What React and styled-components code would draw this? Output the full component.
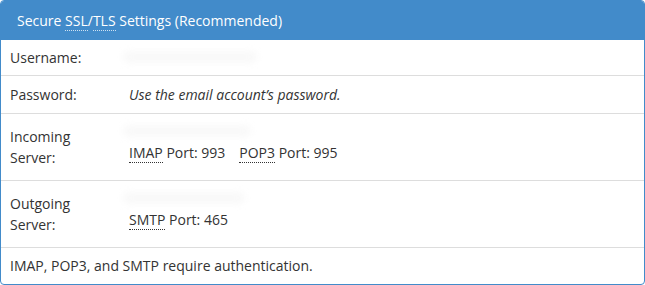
import React from "react";
import styled, { createGlobalStyle } from "styled-components";

const GlobalStyle = createGlobalStyle`
  html, body {
    margin: 0;
    padding: 0;
    background: #fff;
  }
  body {
    font-family: "Open Sans", "Liberation Sans", sans-serif;
    font-size: 14px;
    line-height: 20px;
    color: #333;
  }
`;

const Panel = styled.div`
  width: 645px;
  box-sizing: border-box;
  border: 1px solid #428bca;
  border-radius: 4px;
  overflow: hidden;
  background: #fff;
`;

const Heading = styled.div`
  height: 39px;
  box-sizing: border-box;
  padding: 10px 16px 9px;
  background: #428bca;
  color: #fff;
  font-size: 14px;
  line-height: 20px;
`;

const Abbr = styled.abbr`
  text-decoration: none;
  border-bottom: 1px dotted ${({ $light }) => ($light ? "rgba(255,255,255,0.75)" : "#333")};
  cursor: help;
`;

const Row = styled.div`
  display: grid;
  grid-template-columns: 128px 1fr;
  align-items: center;
  height: ${({ $h }) => $h}px;
  border-bottom: 1px solid #ddd;
`;

const Label = styled.div`
  padding-left: 9px;
  line-height: 21px;
`;

const Value = styled.div`
  font-style: ${({ $italic }) => ($italic ? "italic" : "normal")};
  line-height: 21px;
  padding-bottom: ${({ $server }) => ($server ? 8 : 0)}px;
`;

const Footer = styled.div`
  height: 36px;
  display: flex;
  align-items: center;
  padding-left: 9px;
`;

const Hidden = styled.span`
  display: block;
  width: ${({ $w }) => $w}px;
  height: 12px;
  margin: ${({ $inline }) => ($inline ? "4px 0 5px -6px" : "2px 0 5px -6px")};
  border-radius: 6px;
  background: #f9f9f9;
  filter: blur(3px);
`;

const Port = styled.span`
  & + & {
    margin-left: 14px;
  }
`;

export default function App() {
  return (
    <>
      <GlobalStyle />
      <Panel>
        <Heading>
          Secure <Abbr $light title="Secure Sockets Layer">SSL</Abbr>/
          <Abbr $light title="Transport Layer Security">TLS</Abbr> Settings (Recommended)
        </Heading>
        <Row $h={35}>
          <Label>Username:</Label>
          <Value>
            <Hidden $inline $w={134} />
          </Value>
        </Row>
        <Row $h={37}>
          <Label>Password:</Label>
          <Value $italic>Use the email account’s password.</Value>
        </Row>
        <Row $h={66}>
          <Label>
            Incoming
            <br />
            Server:
          </Label>
          <Value $server>
            <Hidden $w={128} />
            <Port>
              <Abbr title="Internet Message Access Protocol">IMAP</Abbr> Port: 993
            </Port>
            <Port>
              <Abbr title="Post Office Protocol 3">POP3</Abbr> Port: 995
            </Port>
          </Value>
        </Row>
        <Row $h={66}>
          <Label>
            Outgoing
            <br />
            Server:
          </Label>
          <Value $server>
            <Hidden $w={122} />
            <Port>
              <Abbr title="Simple Mail Transfer Protocol">SMTP</Abbr> Port: 465
            </Port>
          </Value>
        </Row>
        <Footer>IMAP, POP3, and SMTP require authentication.</Footer>
      </Panel>
    </>
  );
}
